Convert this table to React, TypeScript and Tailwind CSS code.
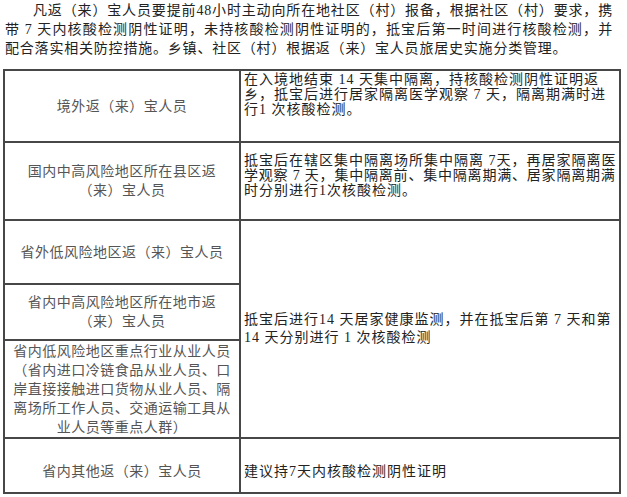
const font = { fontFamily: '"Liberation Serif", "Noto Sans CJK SC", serif' };

const Left = ({ lines, extra = "" }: { lines: string[]; extra?: string }) => (
  <div
    className={`flex items-center justify-center border-r-2 border-b-2 border-[#474747] text-center text-[14px] leading-[19px] tracking-[0.5px] text-[#555] whitespace-nowrap ${extra}`}
  >
    <div>
      {lines.map((l, i) => (
        <div key={i}>{l}</div>
      ))}
    </div>
  </div>
);

export default function App() {
  return (
    <div className="w-[627px] h-[497px] bg-white overflow-hidden" style={font}>
      {/* 说明段落 */}
      <div className="ml-[5px] w-[608px] pt-[1px] text-[14px] leading-[19px] text-[#222] tracking-[0.8px]">
        <div className="pl-[28px] text-justify [text-align-last:justify] whitespace-nowrap">
          凡返（来）宝人员要提前48小时主动向所在地社区（村）报备，根据社区（村）要求，携
        </div>
        <div className="text-justify [text-align-last:justify] whitespace-nowrap">
          带 7 天内核酸检测阴性证明，未持核酸检测阴性证明的，抵宝后第一时间进行核酸检测，并
        </div>
        <div className="whitespace-nowrap">
          配合落实相关防控措施。乡镇、社区（村）根据返（来）宝人员旅居史实施分类管理。
        </div>
      </div>

      {/* 分类表格 */}
      <div className="mt-[11px] ml-[3px] w-[618px] grid grid-cols-[236px_380px] grid-rows-[72px_78px_64px_56px_98px_55px] border-t-2 border-l-2 border-[#474747]">
        <Left lines={["境外返（来）宝人员"]} />
        <div className="border-r-2 border-b-2 border-[#474747] pl-[3px] pt-[1px] text-[14px] leading-[15px] tracking-[1px] text-[#222] whitespace-nowrap">
          <div>在入境地结束 14 天集中隔离，持核酸检测阴性证明返</div>
          <div>乡，抵宝后进行居家隔离医学观察 7 天，隔离期满时进</div>
          <div>行1 次核酸检测。</div>
        </div>

        <Left lines={["国内中高风险地区所在县区返", "（来）宝人员"]} />
        <div className="border-r-2 border-b-2 border-[#474747] pl-[3px] pt-[10px] text-[14px] leading-[15px] tracking-[1px] text-[#222] whitespace-nowrap">
          <div>抵宝后在辖区集中隔离场所集中隔离 7天，再居家隔离医</div>
          <div className="tracking-[0.8px]">学观察 7 天，集中隔离前、集中隔离期满、居家隔离期满</div>
          <div>时分别进行1次核酸检测。</div>
        </div>

        <Left lines={["省外低风险地区返（来）宝人员"]} />
        <div className="row-span-3 flex items-center border-r-2 border-b-2 border-[#474747] pl-[3px] text-[14px] leading-[18px] tracking-[1px] text-[#222] whitespace-nowrap">
          <div>
            <div>抵宝后进行14 天居家健康监测，并在抵宝后第 7 天和第</div>
            <div>14 天分别进行 1 次核酸检测</div>
          </div>
        </div>
        <Left lines={["省内中高风险地区所在地市返", "（来）宝人员"]} />
        <Left
          lines={[
            "省内低风险地区重点行业从业人员",
            "（省内进口冷链食品从业人员、口",
            "岸直接接触进口货物从业人员、隔",
            "离场所工作人员、交通运输工具从",
            "业人员等重点人群）",
          ]}
        />

        <Left lines={["省内其他返（来）宝人员"]} extra="pt-[12px]" />
        <div className="flex items-center border-r-2 border-b-2 border-[#474747] pl-[3px] pt-[12px] text-[14px] leading-[18px] tracking-[1px] text-[#222] whitespace-nowrap">
          建议持7天内核酸检测阴性证明
        </div>
      </div>
    </div>
  );
}
